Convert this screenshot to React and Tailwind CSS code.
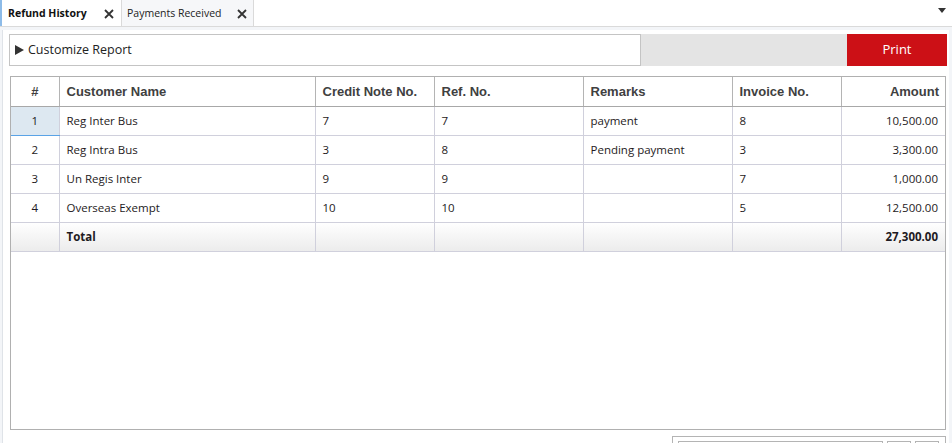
import React from 'react';

const rows = [
    { n: 1, name: 'Reg Inter Bus', credit: '7', ref: '7', remarks: 'payment', invoice: '8', amount: '10,500.00' },
    { n: 2, name: 'Reg Intra Bus', credit: '3', ref: '8', remarks: 'Pending payment', invoice: '3', amount: '3,300.00' },
    { n: 3, name: 'Un Regis Inter', credit: '9', ref: '9', remarks: '', invoice: '7', amount: '1,000.00' },
    { n: 4, name: 'Overseas Exempt', credit: '10', ref: '10', remarks: '', invoice: '5', amount: '12,500.00' },
];

const CloseIcon = () => (
    <svg width="10" height="10" viewBox="0 0 10 10" className="shrink-0">
        <path d="M1 1 L9 9 M9 1 L1 9" stroke="#333" strokeWidth="1.8" />
    </svg>
);

const th = 'h-[29px] border-r border-[#b4b4b4] border-b border-b-[#a8a8a8] text-[13px] font-bold text-[#404040] text-left pl-[7px]';
const td = 'h-[29px] border-r border-b border-[#d0d0dc] text-[11.5px] text-[#1e1a22] pl-[7px]';

export default function App() {
    return (
        <div className="w-[952px] h-[443px] overflow-hidden bg-white flex flex-col" style={{ fontFamily: '"Open Sans", "Noto Sans", sans-serif' }}>
            {/* Tabs */}
            <div className="h-[27px] shrink-0 flex border-b border-[#dadada] relative">
                <div className="w-[121px] flex items-center justify-between pl-[6px] pr-[7px] pt-[2px] border-l-2 border-[#8dbbe8] bg-white">
                    <span className="text-[10.5px] font-bold text-[#111]">Refund History</span>
                    <CloseIcon />
                </div>
                <div className="w-[133px] flex items-center justify-between pl-[5px] pr-[6px] pt-[2px] bg-[#f6f7f9] border-l border-r border-[#dadada]">
                    <span className="text-[10.5px] text-[#222]">Payments Received</span>
                    <CloseIcon />
                </div>
                <div className="flex-1" />
                <div className="w-[20px] flex items-start justify-center pt-[8px]">
                    <svg width="8" height="5" viewBox="0 0 8 5"><path d="M0 0 H8 L4 5 Z" fill="#333" /></svg>
                </div>
            </div>

            {/* Content */}
            <div className="flex-1 bg-[#f3f5f8] pl-[2px] pr-[3px] pt-[3px] flex flex-col">
                <div className="flex-1 bg-white border-l border-[#dfe3e8] pl-[6px] pr-[2px] pt-[4px] flex flex-col">
                    <div className="h-[32px] flex shrink-0">
                        <div className="w-[632px] border border-[#c4c4c4] bg-white flex items-center pl-[5px] gap-[4px] text-[12.5px] text-[#222]">
                            <svg width="9" height="10" viewBox="0 0 9 10"><path d="M0 0 L9 5 L0 10 Z" fill="#333" /></svg>
                            <span>Customize Report</span>
                        </div>
                        <div className="flex-1 bg-[#e4e4e4]" />
                        <button className="w-[100px] bg-[#cc1016] text-white text-[13px] flex items-center justify-center">Print</button>
                    </div>

                    <div className="mt-[10px] ml-[1px] w-[936px] h-[354px] border border-[#b0b0b0] bg-white shrink-0">
                        <table className="table-fixed border-collapse w-[934px]">
                            <colgroup>
                                <col className="w-[48px]" />
                                <col className="w-[256px]" />
                                <col className="w-[119px]" />
                                <col className="w-[149px]" />
                                <col className="w-[149px]" />
                                <col className="w-[109px]" />
                                <col className="w-[104px]" />
                            </colgroup>
                            <thead style={{ fontFamily: '"Liberation Sans", Arial, sans-serif' }}>
                                <tr>
                                    <th className={th + ' !text-center !pl-0'}>#</th>
                                    <th className={th}>Customer Name</th>
                                    <th className={th}>Credit Note No.</th>
                                    <th className={th}>Ref. No.</th>
                                    <th className={th}>Remarks</th>
                                    <th className={th}>Invoice No.</th>
                                    <th className={th + ' !text-right pr-[6px] border-r-0'}>Amount</th>
                                </tr>
                            </thead>
                            <tbody>
                                {rows.map((r) => (
                                    <tr key={r.n}>
                                        <td className={td + ' !pl-0 text-center ' + (r.n === 1 ? 'bg-[#dde8f1] border-b-[#5aa3e6]' : '')}>{r.n}</td>
                                        <td className={td}>{r.name}</td>
                                        <td className={td}>{r.credit}</td>
                                        <td className={td}>{r.ref}</td>
                                        <td className={td}>{r.remarks}</td>
                                        <td className={td}>{r.invoice}</td>
                                        <td className={td + ' text-right pr-[7px] border-r-0'}>{r.amount}</td>
                                    </tr>
                                ))}
                                <tr className="bg-gradient-to-b from-white to-[#ececec]">
                                    <td className={td} />
                                    <td className={td + ' font-bold'}>Total</td>
                                    <td className={td} />
                                    <td className={td} />
                                    <td className={td} />
                                    <td className={td} />
                                    <td className={td + ' text-right pr-[7px] font-bold border-r-0'}>27,300.00</td>
                                </tr>
                            </tbody>
                        </table>
                    </div>

                    {/* Pager */}
                    <div className="mt-[6px] ml-[663px] w-[274px] h-[20px] border border-[#b4b4b4] flex gap-[4px] px-[5px] pt-[4px]">
                        <div className="w-[205px] h-[10px] border border-[#b4b4b4]" />
                        <div className="w-[24px] h-[10px] border border-[#b4b4b4]" />
                        <div className="w-[24px] h-[10px] border border-[#b4b4b4]" />
                    </div>
                </div>
            </div>
        </div>
    );
}
